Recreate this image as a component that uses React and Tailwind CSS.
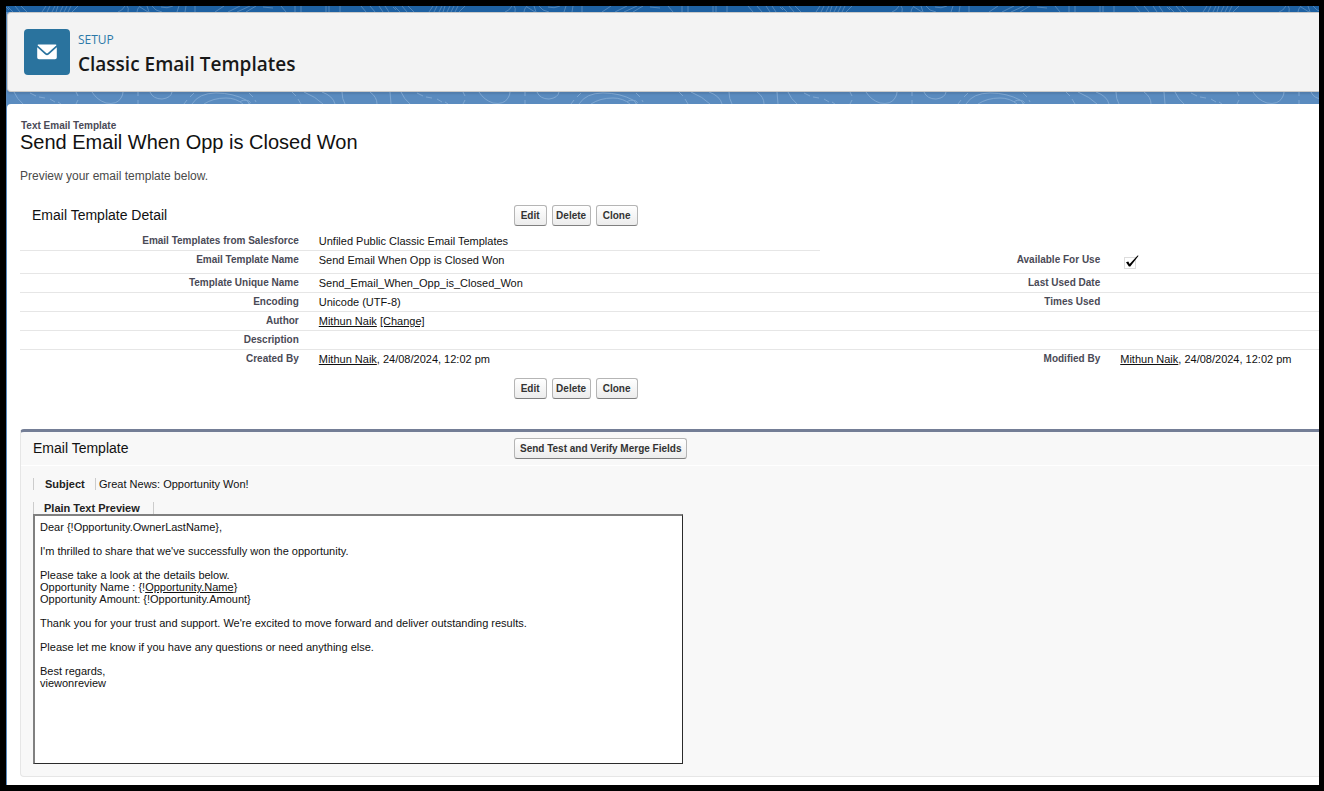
import React from "react";

const BUTTON =
  "h-[21px] rounded-[3px] border border-[#b5b5b5] border-b-[#7f7f7f] bg-linear-to-b from-white to-[#ececec] text-center text-[10px] leading-[18px] font-bold whitespace-nowrap text-[#333]";

function MapLines({ id, top }) {
  return (
    <svg className="block h-full w-full" aria-hidden="true" fill="none">
      <defs>
        {top ? (
          <pattern id={id} width="387" height="6" patternUnits="userSpaceOnUse">
            <g stroke="#6f9cc9" strokeWidth="1" opacity="0.6">
              <path d="M2 1l5 5M9 0l5 6M15 0l6 6M-1 0l4 4M36 6l4-6M41 6l3-6M46 6l3-6M50 6l2-6M54 6l3-6M58 6l3-6M62 6l3-6M66 6l6-6" />
              <path d="M112 6q4-1 7-6M121 0q2 2 1 6M131 6q0-3 3-6M134 1l8 5M141 0l2 6M146 0q3 5 10 6M155 1q6 2 12-1M171 6l2-6M179 6l1-6M189 0v6" />
              <path d="M209 6l9-6M222 6l12-6M231 6l13-6M240 6l10-6M257 1l10 1M275 0l5 6M289 0v6M295 0v6M320 0v6M323 0v6M334 0v6M355 0l5 6M364 0l5 6M373 0l4 6M379 0l4 6" />
            </g>
          </pattern>
        ) : (
          <pattern id={id} width="387" height="12" patternUnits="userSpaceOnUse">
            <g stroke="#9bbde0" strokeWidth="1" opacity="0.55">
              <path d="M8 0q3 7 9 12M86 0q5 8 14 11q11 2 15-5q2-3 2-6M144 0q3 7 12 7q9-1 10-7" />
              <path d="M186 12q7-11 24-11q17 0 30 7q3 2 3 4M198 12q9-6 22-6q10 0 17 6M234 10q3-3 9-1q3 2 0 3" />
              <path d="M298 0q12 5 19 12M316 0q11 4 13 12M336 0q0 7 3 12M364 0q7 5 7 12M384 0l1 12" />
              <path d="M24 1l6 3M33 5l6 1M44 7l5 3M52 10l3 2M70 0l2 4M72 8l-2 4M132 0v4M132 8v4M178 12l3-4M184 5l4-4M243 1l4 4M249 8l1 2M286 0l4 4M292 7l3 5" />
            </g>
          </pattern>
        )}
      </defs>
      <rect width="100%" height="100%" fill={`url(#${id})`} />
    </svg>
  );
}

function ActionButtons() {
  return (
    <div className="flex gap-[5px]">
      <button type="button" className={`${BUTTON} w-[33px]`}>Edit</button>
      <button type="button" className={`${BUTTON} w-[39px]`}>Delete</button>
      <button type="button" className={`${BUTTON} w-[42px]`}>Clone</button>
    </div>
  );
}

function TextLink({ children }) {
  return (
    <a href="#" className="underline">
      {children}
    </a>
  );
}

function CheckMark() {
  return (
    <svg className="mt-[3px] ml-1 block" width="16" height="16" viewBox="0 0 16 16" role="img" aria-label="Checked">
      <rect x="0.5" y="3.5" width="11" height="11" fill="none" stroke="#bbb" strokeDasharray="1 1" />
      <path d="M2 8.2L4.3 7.4L5.6 10L13.6 1.6L14.6 1.8L6.3 12.6H4.9Z" fill="#000" />
    </svg>
  );
}

const stamp = (
  <>
    <TextLink>Mithun Naik</TextLink>, 24/08/2024, 12:02 pm
  </>
);

const ROWS = [
  { label: "Email Templates from Salesforce", value: "Unfiled Public Classic Email Templates" },
  { label: "Email Template Name", value: "Send Email When Opp is Closed Won", label2: "Available For Use", value2: <CheckMark />, tall: true },
  { label: "Template Unique Name", value: "Send_Email_When_Opp_is_Closed_Won", label2: "Last Used Date" },
  { label: "Encoding", value: "Unicode (UTF-8)", label2: "Times Used" },
  {
    label: "Author",
    value: (
      <>
        <TextLink>Mithun Naik</TextLink> <TextLink>[Change]</TextLink>
      </>
    ),
  },
  { label: "Description", value: "" },
  { label: "Created By", value: stamp, label2: "Modified By", value2: stamp },
];

const LABEL = "p-0 pr-5 text-right align-top text-[10px] leading-[18px] font-bold text-[#4a4a56]";
const VALUE = "p-0 align-top text-[11px] leading-[19px] whitespace-nowrap";

function DetailTable() {
  return (
    <table className="w-full table-fixed border-separate border-spacing-0">
      <colgroup>
        <col className="w-[23%]" />
        <col className="w-[38.6%]" />
        <col className="w-[23.1%]" />
        <col />
      </colgroup>
      <tbody>
        {ROWS.map((row, i) => {
          const line = i < ROWS.length - 1 ? "border-b border-[#e6e6e6]" : "";
          const right = i > 0 ? line : "";
          return (
            <tr key={row.label} className={row.tall ? "h-[23px]" : "h-[19px]"}>
              <th scope="row" className={`${LABEL} ${line}`}>
                <div className="h-[18px]">{row.label}</div>
              </th>
              <td className={`${VALUE} ${line}`}>
                <div className="h-[18px]">{row.value}</div>
              </td>
              <th scope="row" className={`${LABEL} ${right}`}>
                {row.label2}
              </th>
              <td className={`${VALUE} ${right}`}>
                <div className="h-[18px]">{row.value2}</div>
              </td>
            </tr>
          );
        })}
      </tbody>
    </table>
  );
}

const MESSAGE = [
  ["Dear {!Opportunity.OwnerLastName},"],
  ["I'm thrilled to share that we've successfully won the opportunity."],
  [
    "Please take a look at the details below.",
    <span key="name" className="flex">
      <span className="whitespace-pre">{"Opportunity Name : {!"}</span>
      <TextLink>Opportunity.Name</TextLink>
      <span>{"}"}</span>
    </span>,
    "Opportunity Amount: {!Opportunity.Amount}",
  ],
  ["Thank you for your trust and support. We're excited to move forward and deliver outstanding results."],
  ["Please let me know if you have any questions or need anything else."],
  ["Best regards,", "viewonreview"],
];

export default function App() {
  return (
    <div className="min-h-screen bg-black pt-[6px] pr-[5px] pb-[6px] pl-[6px] font-['Liberation_Sans',Arial,sans-serif] text-[#111]">
      <div className="bg-[#5a8bbf]">
        <div className="h-[6px] bg-[#1e61a2]">
          <MapLines id="lines-top" top />
        </div>
        <header className="ml-px flex h-20 items-center gap-2 rounded-l-[4px] border border-r-0 border-[#c9c9c9] bg-[#f3f3f3] pl-4 shadow-[0_2px_2px_rgba(0,0,0,0.1)]">
          <div className="flex size-[46px] items-center justify-center rounded-[4px] bg-[#2a739e]">
            <svg width="20" height="16" viewBox="0 0 20 16" aria-hidden="true" fill="#fff">
              <path d="M1.2 0.6H18.8Q19.6 0.6 19.2 1.4L10.9 9Q10 9.8 9.1 9L0.8 1.4Q0.4 0.6 1.2 0.6Z" />
              <path d="M0.2 3.2L8.2 10.6Q10 12 11.8 10.6L19.8 3.2V13.4Q19.8 15.2 18 15.2H2Q0.2 15.2 0.2 13.4Z" />
            </svg>
          </div>
          <div className="pt-[3px] font-['Open_Sans','Noto_Sans',sans-serif]">
            <p className="text-[12px] leading-5 text-[#2b78a8]">SETUP</p>
            <h1 className="text-[19px] leading-7 font-semibold text-[#181818]">Classic Email Templates</h1>
          </div>
        </header>
        <div className="h-3">
          <MapLines id="lines-bottom" />
        </div>

        <main className="ml-px rounded-tl-[4px] bg-white pt-4 pb-2 pl-[13px]">
          <p className="pl-px text-[10px] leading-3 font-bold text-[#4a4a56]">Text Email Template</p>
          <h2 className="text-[20px] leading-5">Send Email When Opp is Closed Won</h2>
          <p className="mt-4 text-[12px] leading-4 text-[#4a4a4a]">Preview your email template below.</p>

          <section className="mt-[21px]">
            <div className="flex items-center">
              <h3 className="w-[38%] pl-3 text-[14px] leading-[21px]">Email Template Detail</h3>
              <ActionButtons />
            </div>
            <div className="mt-[6px]">
              <DetailTable />
            </div>
            <div className="mt-[9px] ml-[38%]">
              <ActionButtons />
            </div>
          </section>

          <section className="mt-[30px] rounded-l-[4px] border-t-[3px] border-b border-l border-t-[#747e96] border-b-[#e6e6e6] border-l-[#e6e6e6] bg-[#f8f8f8] pb-3">
            <div className="flex items-center border-b border-white py-[6px]">
              <h3 className="w-[38%] pl-3 text-[14px] leading-[21px]">Email Template</h3>
              <button type="button" className={`${BUTTON} w-[173px]`}>
                Send Test and Verify Merge Fields
              </button>
            </div>
            <div className="pt-3 pl-3 text-[11px] leading-3">
              <div className="flex">
                <h4 className="w-[62px] border-l border-[#ccc] pl-[11px] font-bold text-[#222]">Subject</h4>
                <p className="border-l border-[#ccc] pl-[3px]">Great News: Opportunity Won!</p>
              </div>
              <h4 className="mt-3 w-[121px] border-x border-[#ccc] pl-[10px] font-bold text-[#222]">Plain Text Preview</h4>
              <div className="flex h-[250px] w-[650px] max-w-full flex-col gap-3 border-t-2 border-r border-b border-l-2 border-t-[#808080] border-r-[#2b2b2b] border-b-[#2b2b2b] border-l-[#808080] bg-white px-[5px] py-[5px]">
                {MESSAGE.map((lines, i) => (
                  <div key={i}>
                    {lines.map((line, j) => (
                      <p key={j}>{line}</p>
                    ))}
                  </div>
                ))}
              </div>
            </div>
          </section>
        </main>
      </div>
    </div>
  );
}
